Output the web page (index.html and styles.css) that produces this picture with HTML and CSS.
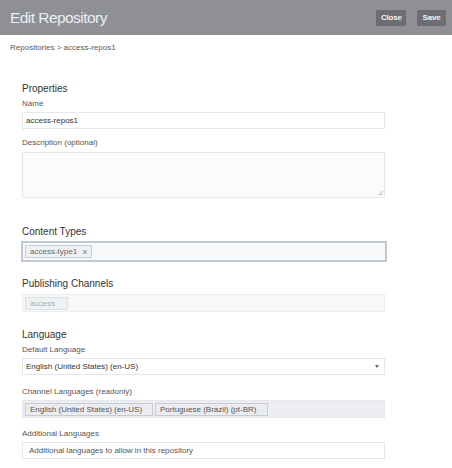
FILE: index.html
```html
<!DOCTYPE html>
<html>
<head>
<meta charset="utf-8">
<link rel="stylesheet" href="styles.css">
</head>
<body>
<header class="topbar">
  <h1 class="title">Edit Repository</h1>
  <div class="actions">
    <button class="btn">Close</button>
    <button class="btn">Save</button>
  </div>
</header>
<nav class="crumbs">Repositories &gt; access-repos1</nav>
<main class="form">
  <h2 class="heading h-props">Properties</h2>
  <div class="label">Name</div>
  <div class="input text">access-repos1</div>
  <div class="label l-gap">Description (optional)</div>
  <div class="textarea">
    <svg class="grip" width="6" height="6" viewBox="0 0 6 6"><path d="M1 5.5L5.5 1M3.5 5.5L5.5 3.5" stroke="#9aa0a8" stroke-width="0.8"/></svg>
  </div>

  <h2 class="heading h-types">Content Types</h2>
  <div class="input tags-input">
    <span class="tag">access-type1 <span class="x">×</span></span>
  </div>

  <h2 class="heading h-pub">Publishing Channels</h2>
  <div class="input disabled">
    <span class="tag tag-dis">access</span>
  </div>

  <h2 class="heading h-lang">Language</h2>
  <div class="label">Default Language</div>
  <div class="input text select">English (United States) (en-US)<span class="caret"></span></div>
  <div class="label l-gap2">Channel Languages (readonly)</div>
  <div class="input readonly">
    <span class="tag tag-ro">English (United States) (en-US)</span>
    <span class="tag tag-ro">Portuguese (Brazil) (pt-BR)</span>
  </div>
  <div class="label l-gap3">Additional Languages</div>
  <div class="input text placeholder">Additional languages to allow in this repository</div>
</main>
</body>
</html>
```
FILE: styles.css
```css
html, body {
  margin: 0;
  padding: 0;
  background: #ffffff;
  font-family: "Liberation Sans", Arial, sans-serif;
  color: #333;
}
.topbar {
  height: 35px;
  background: #8e9096;
  display: flex;
  align-items: center;
  justify-content: space-between;
  padding: 0 6px 0 10px;
}
.title {
  margin: 0;
  font-size: 15.5px;
  font-weight: normal;
  letter-spacing: -0.55px;
  color: #eceef1;
}
.actions {
  display: flex;
  gap: 11px;
}
.btn {
  height: 16px;
  padding: 0 5px;
  border: none;
  background: #6c6e73;
  color: #f3f3f3;
  font-family: "Liberation Sans", Arial, sans-serif;
  font-size: 8px;
  font-weight: bold;
  letter-spacing: -0.2px;
  border-radius: 1px;
}
.btn:first-child { width: 30px; }
.btn:last-child { width: 29px; }
.crumbs {
  margin-top: 8px;
  padding-left: 10px;
  font-size: 8px;
  line-height: 10px;
  color: #555a60;
}
.form {
  width: 363px;
  padding-left: 22px;
  display: flex;
  flex-direction: column;
}
.heading {
  margin: 0 0 4px;
  font-size: 10px;
  line-height: 12px;
  font-weight: normal;
  color: #333;
}
.h-props { margin-top: 30px; }
.h-types { margin-top: 28px; margin-bottom: 3px; }
.h-pub { margin-top: 16px; }
.h-lang { margin-top: 17px; }
.label {
  font-size: 8px;
  line-height: 10px;
  color: #555;
  margin-bottom: 3px;
}
.l-gap { margin-top: 9px; margin-bottom: 4px; }
.l-gap2 { margin-top: 12px; }
.l-gap3 { margin-top: 11px; }
.input {
  box-sizing: border-box;
  height: 17px;
  border: 1px solid #e4e7eb;
  background: #fff;
  display: flex;
  align-items: center;
  font-size: 8px;
  color: #333;
}
.text { padding-left: 3px; }
.placeholder { padding-left: 6px; color: #555; }
.textarea {
  box-sizing: border-box;
  height: 46px;
  border: 1px solid #e4e7eb;
  background: #fafbfc;
  position: relative;
}
.grip { position: absolute; right: 1px; bottom: 1px; }
.tags-input {
  height: 21px;
  margin-left: -1px;
  width: 366px;
  border: 2px solid #c2c9d5;
  background: #f8f9fa;
  padding-left: 2px;
}
.tag {
  box-sizing: border-box;
  height: 13px;
  display: inline-flex;
  align-items: center;
  padding: 0 4px;
  border: 1px solid #c9cdd4;
  background: #eef0f3;
  color: #666;
  font-size: 8px;
  margin-right: 2px;
}
.x { margin-left: 5px; font-size: 9px; color: #777; }
.disabled {
  height: 18px;
  background: #f7f8f9;
  border-color: #eceef1;
  padding-left: 2px;
}
.tag-dis {
  width: 43px;
  color: #a8abb0;
  border-color: #dcdfe3;
  background: #eff1f3;
}
.select { position: relative; }
.caret {
  position: absolute;
  right: 5px;
  top: 6px;
  width: 0;
  height: 0;
  border-left: 2.5px solid transparent;
  border-right: 2.5px solid transparent;
  border-top: 3px solid #666;
}
.readonly {
  height: 18px;
  background: #eceef1;
  border-color: #e6e8eb;
  padding-left: 2px;
}
.tag-ro {
  color: #555;
  background: #eaecef;
  border-color: #c8ccd2;
}
.tag-ro:first-child { width: 128px; }
.tag-ro:last-child { width: 113px; }
```
